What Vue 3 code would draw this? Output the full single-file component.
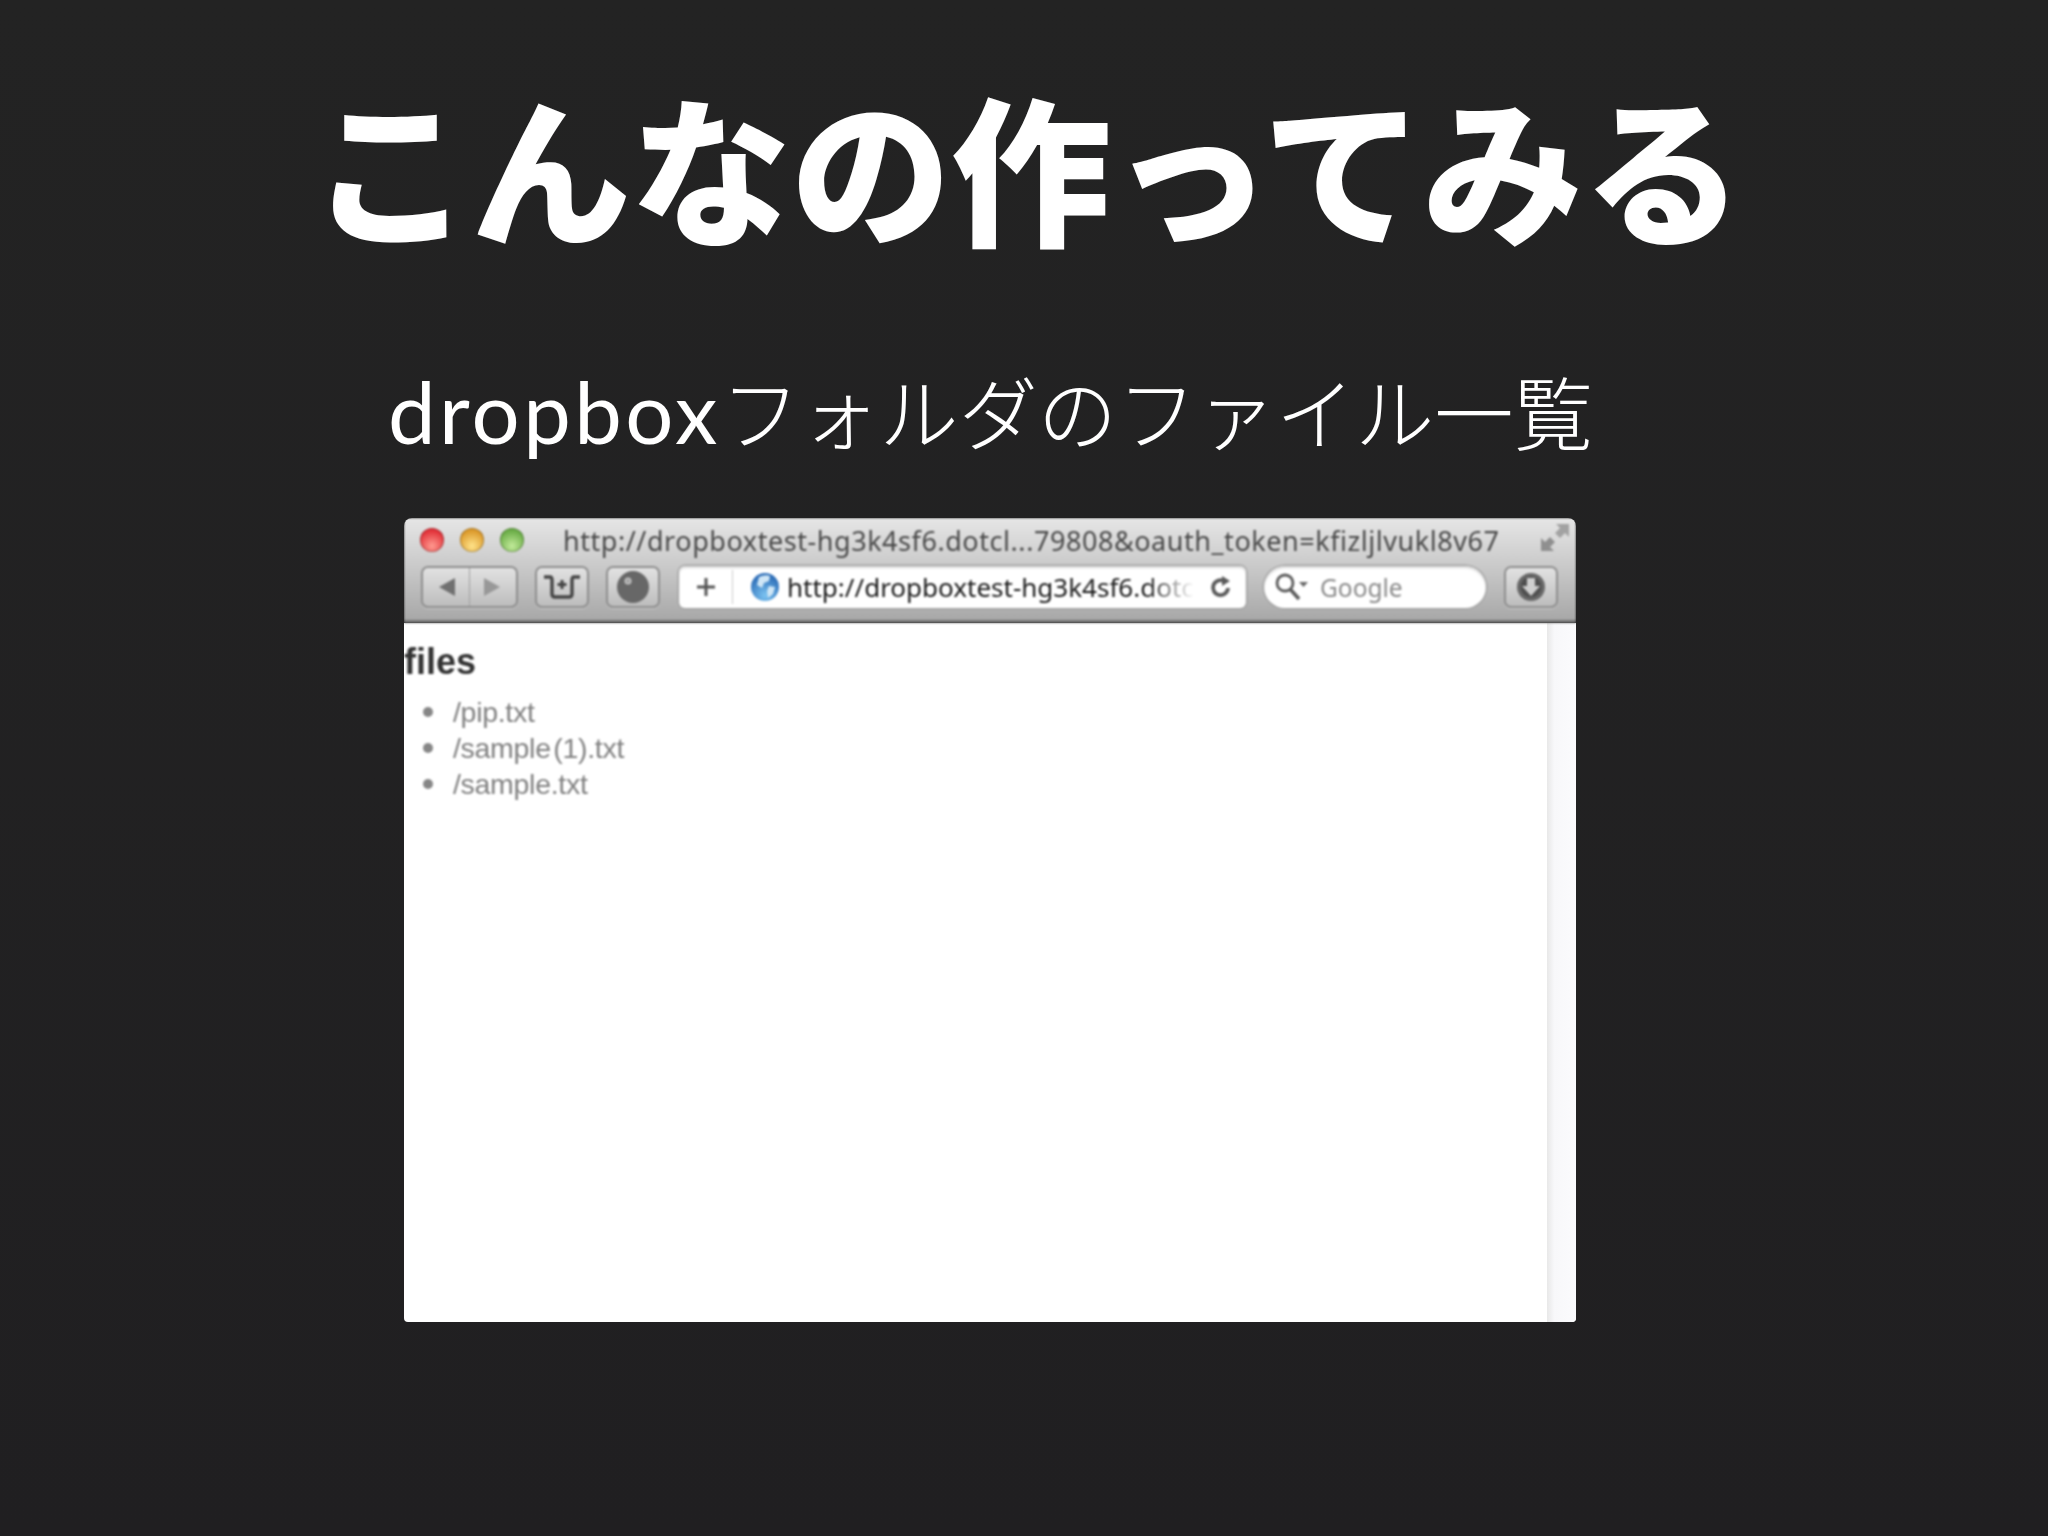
<template>
  <div class="slide">
    <h1 class="title">こんなの作ってみる</h1>
    <div class="content">
      <p class="subtitle"><span class="latin">dropbox</span>フォルダのファイル一覧</p>
      <div class="browser">
        <div class="chrome">
          <div class="title-row">
            <div class="lights">
              <span class="light red"></span>
              <span class="light yellow"></span>
              <span class="light green"></span>
            </div>
            <span class="page-title">http://dropboxtest-hg3k4sf6.dotcl...79808&amp;oauth_token=kfizljlvukl8v67</span>
            <svg class="expand" width="30" height="30" viewBox="0 0 30 30">
              <path d="M16 1h13v13l-4-4-5 5-5-5 5-5z" fill="#a2a2a2" />
              <path d="M1 28V15l4 4 5-5 5 5-5 5 4 4z" fill="#8f8f8f" />
            </svg>
          </div>
          <div class="tool-row">
            <div class="btn nav">
              <svg width="18" height="18" viewBox="0 0 18 18"><path d="M1 9 17 0v18z" fill="#707070" /></svg>
              <i class="nav-line"></i>
              <svg width="18" height="18" viewBox="0 0 18 18"><path d="M17 9 1 0v18z" fill="#989898" /></svg>
            </div>
            <div class="btn square">
              <svg width="38" height="25" viewBox="0 0 38 25">
                <path d="M1 2h6q2 0 2 3v14q0 3 3 3h14q3 0 3-3V5q0-3 2-3h6" fill="none" stroke="#454545" stroke-width="3.400" />
                <path d="M19 5v9M14.500 9.500h9" stroke="#454545" stroke-width="3" />
              </svg>
            </div>
            <div class="btn square wide">
              <svg width="34" height="34" viewBox="0 0 34 34">
                <circle cx="17" cy="17" r="16" fill="#676767" />
                <circle cx="12" cy="11" r="3.500" fill="#c4c4c4" />
                <circle cx="12" cy="11" r="1.500" fill="#8c8c8c" />
              </svg>
            </div>
            <div class="address">
              <svg class="plus" width="22" height="22" viewBox="0 0 22 22"><path d="M11 2v18M2 11h18" stroke="#555" stroke-width="3" /></svg>
              <i class="addr-line"></i>
              <svg class="globe" width="30" height="30" viewBox="0 0 30 30">
                <defs>
                  <radialGradient id="globe-fill" cx="50%" cy="80%" r="70%">
                    <stop offset="0" stop-color="#7cc4f2" />
                    <stop offset="1" stop-color="#2f6fb8" />
                  </radialGradient>
                </defs>
                <circle cx="15" cy="15" r="14" fill="url(#globe-fill)" />
                <path d="M9 5q6-3 11-1l-1 5-5 2-2 5-5-3zM19 14l6 1-2 7-5 4-1-7z" fill="#cfe6f6" />
              </svg>
              <span class="url">http://dropboxtest-hg3k4sf6.dotc</span>
              <svg class="reload" width="24" height="24" viewBox="0 0 24 24">
                <path d="M19 13a7.500 7.500 0 1 1-4-7" fill="none" stroke="#5a5a5a" stroke-width="3.800" />
                <path d="M13 1l8 5-8 5z" fill="#5a5a5a" />
              </svg>
            </div>
            <div class="search">
              <svg width="42" height="30" viewBox="0 0 42 30">
                <circle cx="11" cy="11" r="8" fill="none" stroke="#5c5c5c" stroke-width="2.800" />
                <path d="M16 17l9 10" stroke="#5c5c5c" stroke-width="3.600" />
                <path d="M25 10h9l-4.500 5z" fill="#666" />
              </svg>
              <span class="search-text">Google</span>
            </div>
            <div class="btn square download">
              <svg width="30" height="30" viewBox="0 0 30 30">
                <circle cx="15" cy="15" r="14" fill="#686868" />
                <circle cx="15" cy="15" r="10.500" fill="#4f4f4f" />
                <path d="M11 6h8v8h5l-9 10-9-10h5z" fill="#cfcfcf" />
              </svg>
            </div>
          </div>
        </div>
        <div class="page">
          <div class="page-body">
            <h2 class="files">files</h2>
            <ul class="file-list">
              <li v-for="name in files" :key="name">{{ name }}</li>
            </ul>
          </div>
          <div class="scrollbar"></div>
        </div>
      </div>
    </div>
  </div>
</template>

<script setup>
const files = ['/pip.txt', '/sample (1).txt', '/sample.txt']
</script>

<style>
body {
  margin: 0;
  background: #212022;
}
</style>

<style scoped>
.slide {
  width: 2048px;
  height: 1536px;
  overflow: hidden;
  background: linear-gradient(#232323, #201f21);
  display: flex;
  flex-direction: column;
  font-family: "Noto Sans CJK JP", sans-serif;
  color: #fff;
}

.title {
  margin: 0;
  padding-top: 64px;
  padding-left: 6px;
  font-size: 160px;
  line-height: 200px;
  font-weight: 900;
  text-align: center;
  white-space: nowrap;
}

.content {
  padding-left: 388px;
}

.subtitle {
  margin: 96px 0 0;
  font-size: 79.300px;
  line-height: 100px;
  font-weight: 300;
  white-space: nowrap;
}

.latin {
  font-family: "Lato", sans-serif;
  font-size: 85px;
  letter-spacing: 3.400px;
  font-weight: 400;
}

.browser {
  margin: 57px 0 0 16px;
  width: 1172px;
  height: 804px;
  border-radius: 8px 8px 4px 4px;
  overflow: hidden;
  display: flex;
  flex-direction: column;
}

.chrome {
  height: 105px;
  box-sizing: border-box;
  border-bottom: 3px solid #737373;
  background: linear-gradient(#e6e6e6, #c8c8c8 50%, #a8a8a8);
  filter: blur(0.8px);
}

.title-row {
  height: 44px;
  display: flex;
  align-items: center;
  padding-left: 16px;
}

.lights {
  display: flex;
  gap: 16px;
}

.light {
  width: 24px;
  height: 24px;
  border-radius: 50%;
  box-shadow: inset 0 0 0 1px rgba(0, 0, 0, 0.25);
}

.red {
  background: radial-gradient(circle at 50% 75%, #ff9a90, #e2333a 70%);
}

.yellow {
  background: radial-gradient(circle at 50% 75%, #ffe38a, #dc9a2c 70%);
}

.green {
  background: radial-gradient(circle at 50% 75%, #c2ea9a, #6cae48 70%);
}

.page-title {
  margin-left: 39px;
  width: 935px;
  font-family: "Noto Sans", sans-serif;
  font-size: 27px;
  letter-spacing: 0.550px;
  color: #4a4a4a;
  white-space: nowrap;
}

.expand {
  margin-left: 42px;
  margin-top: -4px;
}

.tool-row {
  display: flex;
  align-items: center;
  padding: 4px 0 0 17px;
  height: 42px;
}

.btn {
  height: 42px;
  box-sizing: border-box;
  border: 2px solid #8e8e8e;
  border-radius: 7px;
  background: linear-gradient(#e2e2e2, #bdbdbd);
  box-shadow: 0 1px 0 rgba(255, 255, 255, 0.35);
  display: flex;
  align-items: center;
  justify-content: center;
}

.nav {
  width: 97px;
  justify-content: space-between;
  padding: 0 15px;
}

.nav-line {
  width: 1px;
  height: 38px;
  background: #a0a0a0;
}

.square {
  width: 54px;
  margin-left: 17px;
}

.wide {
  margin-right: 19px;
}

.address {
  width: 567px;
  height: 42px;
  box-sizing: border-box;
  border-radius: 6px;
  background: #fff;
  box-shadow: 0 0 0 1.500px #a4a4a4, inset 0 2px 2px #d8d8d8;
  display: flex;
  align-items: center;
  padding: 0 13px 0 16px;
}

.addr-line {
  width: 1px;
  height: 34px;
  margin-left: 15px;
  background: #ccc;
}

.globe {
  margin-left: 17px;
}

.url {
  margin-left: 7px;
  font-family: "Noto Sans", sans-serif;
  font-size: 26px;
  color: #1a1a1a;
  white-space: nowrap;
  -webkit-mask-image: linear-gradient(90deg, #000 88%, transparent);
  mask-image: linear-gradient(90deg, #000 88%, transparent);
}

.reload {
  margin-left: auto;
}

.search {
  margin-left: 18px;
  width: 222px;
  height: 42px;
  box-sizing: border-box;
  border-radius: 21px;
  background: #fff;
  box-shadow: 0 0 0 1.500px #a4a4a4, inset 0 2px 2px #d8d8d8;
  display: flex;
  align-items: center;
  padding-left: 10px;
}

.search-text {
  margin-left: 4px;
  font-family: "Noto Sans", sans-serif;
  font-size: 24.500px;
  color: #8a8a8a;
}

.download {
  margin-left: 18px;
}

.page {
  flex: 1;
  display: flex;
  background: #fff;
}

.page-body {
  flex: 1;
  filter: blur(0.8px);
}

.files {
  margin: 17px 0 0;
  font-family: "Liberation Sans", sans-serif;
  font-size: 36px;
  line-height: 44px;
  font-weight: 700;
  color: #333;
}

.file-list {
  margin: 10px 0 0;
  padding: 0 0 0 19px;
  list-style: none;
  font-family: "Liberation Sans", sans-serif;
  font-size: 28.500px;
  line-height: 36px;
  letter-spacing: -0.300px;
  word-spacing: -5px;
  color: #808080;
}

.file-list li {
  display: flex;
  align-items: center;
  gap: 20px;
  white-space: pre;
}

.file-list li::before {
  content: "";
  width: 10px;
  height: 10px;
  border-radius: 50%;
  background: #868686;
}

.scrollbar {
  width: 29px;
  background: linear-gradient(90deg, #e8e8e8, #f8f8fa 25%, #fbfbfd);
}
</style>
